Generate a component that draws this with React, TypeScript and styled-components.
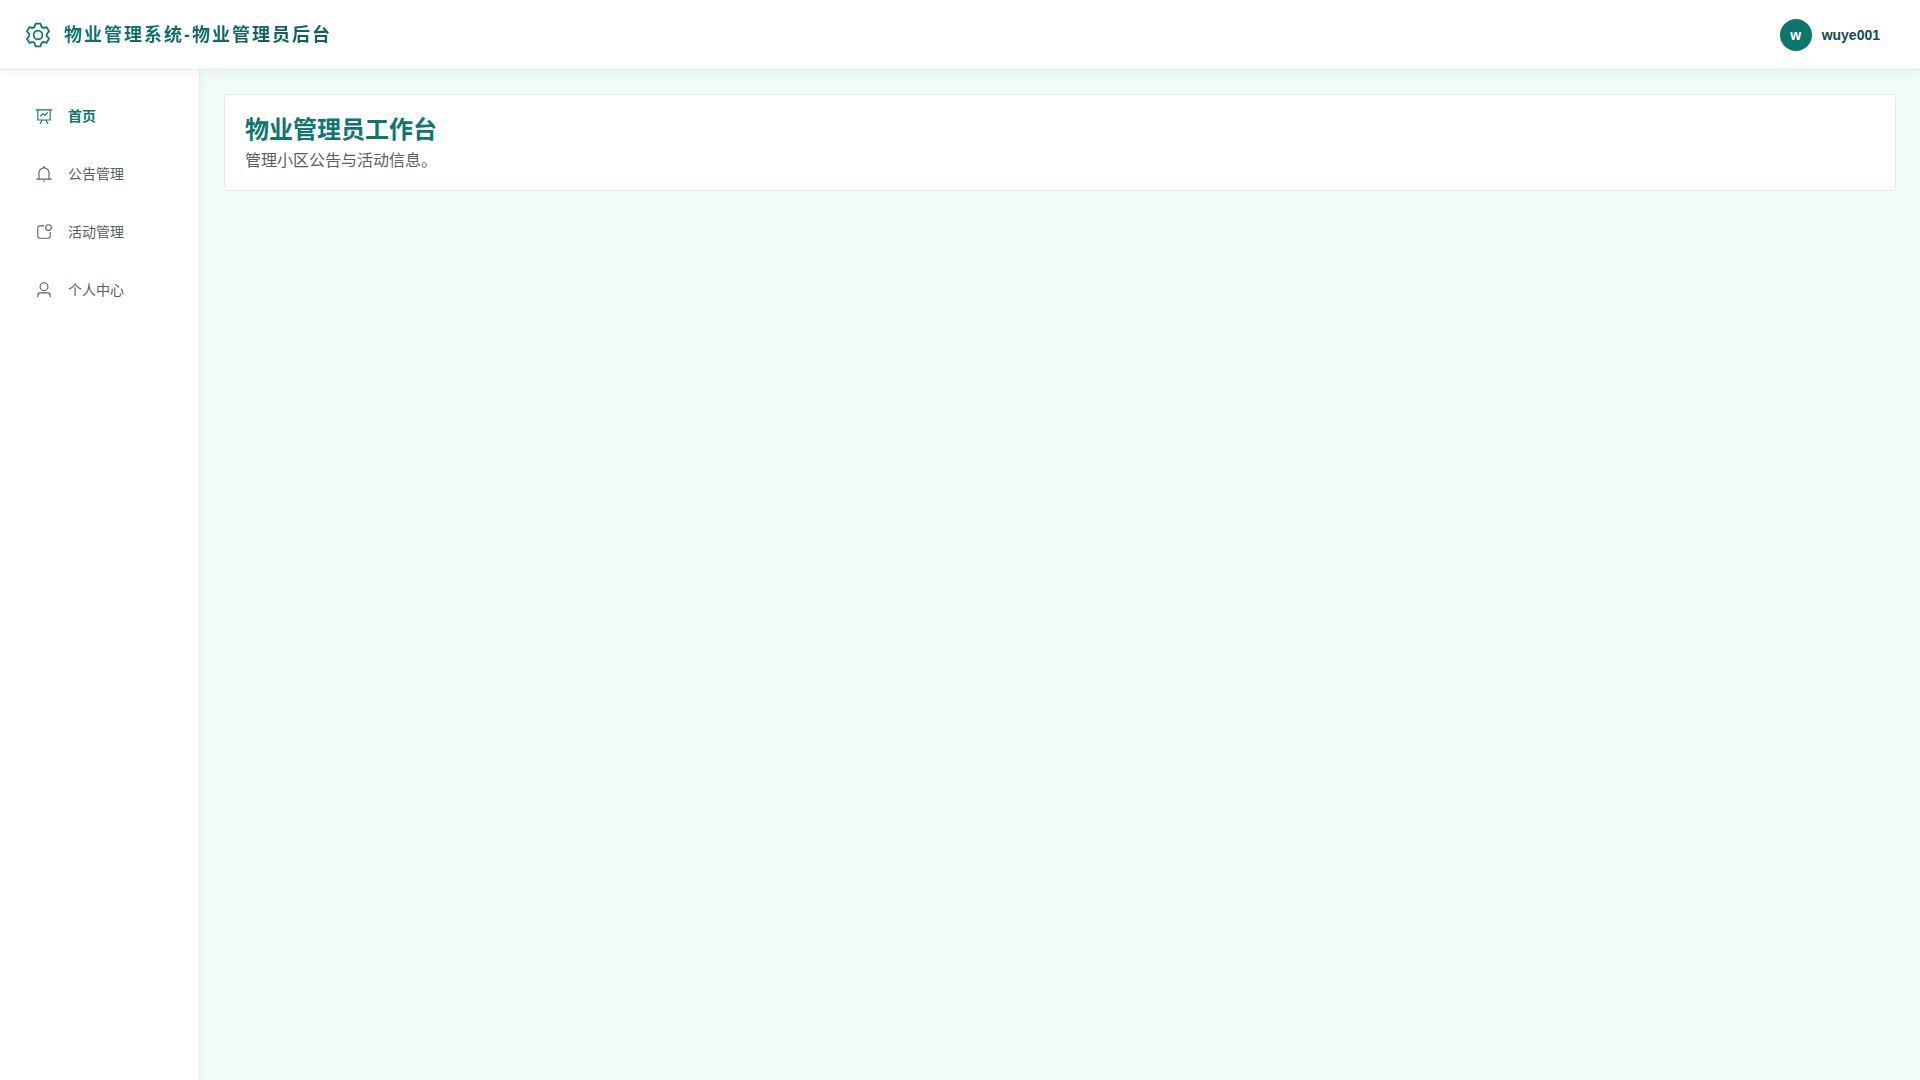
import React from "react";
import styled, { createGlobalStyle } from "styled-components";

const GlobalStyle = createGlobalStyle`
  *, *::before, *::after { box-sizing: border-box; }
  body {
    margin: 0;
    background: #f0fdfa;
    font-family: "Liberation Sans", "Noto Sans CJK SC", sans-serif;
    font-size: 14px;
  }
`;

const Page = styled.div`
  display: flex;
  flex-direction: column;
  min-height: 100vh;
`;

const Header = styled.header`
  position: relative;
  z-index: 1;
  display: flex;
  align-items: center;
  justify-content: space-between;
  height: 70px;
  padding: 0 24px;
  background: #fff;
  border-bottom: 1px solid #d1fae5;
  box-shadow: 0 2px 12px rgba(0, 0, 0, 0.05);
`;

const Brand = styled.div`
  display: flex;
  align-items: center;
  gap: 12px;
  color: #0f766e;
`;

const BrandName = styled.span`
  font-size: 18px;
  font-weight: 600;
  line-height: 20px;
  letter-spacing: 2px;
  background: linear-gradient(135deg, #0f766e, #115e59);
  background-clip: text;
  -webkit-text-fill-color: transparent;
`;

const UserButton = styled.button`
  display: flex;
  align-items: center;
  gap: 10px;
  padding: 8px 16px;
  border: 0;
  background: none;
  color: #134e4a;
  font: inherit;
  font-weight: 600;
  cursor: pointer;
`;

const Avatar = styled.span`
  display: flex;
  align-items: center;
  justify-content: center;
  width: 32px;
  height: 32px;
  border-radius: 50%;
  background: #0f766e;
  color: #fff;
`;

const Body = styled.div`
  display: flex;
  flex: 1;
`;

const Sidebar = styled.nav`
  flex: 0 0 200px;
  padding: 21px 12px;
  background: #fff;
  border-right: 1px solid #d1fae5;
  box-shadow: 2px 0 8px rgba(0, 0, 0, 0.04);
`;

const Menu = styled.ul`
  display: flex;
  flex-direction: column;
  gap: 8px;
  margin: 0;
  padding: 0;
  list-style: none;
`;

const MenuLink = styled.a<{ $active?: boolean }>`
  display: flex;
  align-items: center;
  gap: 12px;
  height: 50px;
  padding: 0 20px;
  color: ${(p) => (p.$active ? "#0f766e" : "#57635f")};
  font-weight: ${(p) => (p.$active ? 600 : 400)};
  line-height: 20px;
  text-decoration: none;
`;

const IconSlot = styled.span`
  display: flex;
  justify-content: center;
  width: 24px;
`;

const Main = styled.main`
  flex: 1;
  padding: 24px;
`;

const Card = styled.section`
  padding: 20px;
  background: #fff;
  border: 1px solid #e4e7ed;
  border-radius: 4px;
`;

const Title = styled.h1`
  margin: 0 0 6px;
  color: #0f766e;
  font-size: 24px;
  line-height: 30px;
`;

const Description = styled.p`
  margin: 0;
  color: #57635f;
  font-size: 16px;
  line-height: 19px;
`;

const icons = {
  setting:
    "M600.704 64a32 32 0 0 1 30.464 22.208l35.2 109.376c14.784 7.232 28.928 15.36 42.432 24.512l112.384-24.192a32 32 0 0 1 34.432 15.36L944.32 364.8a32 32 0 0 1-4.032 37.504l-77.12 85.12a357.12 357.12 0 0 1 0 49.024l77.12 85.248a32 32 0 0 1 4.032 37.504l-88.704 153.6a32 32 0 0 1-34.432 15.296L708.8 803.904c-13.44 9.088-27.648 17.28-42.368 24.512l-35.264 109.376A32 32 0 0 1 600.704 960H423.296a32 32 0 0 1-30.464-22.208L357.696 828.48a351.616 351.616 0 0 1-42.56-24.64l-112.32 24.256a32 32 0 0 1-34.432-15.36L79.68 659.2a32 32 0 0 1 4.032-37.504l77.12-85.248a357.12 357.12 0 0 1 0-48.896l-77.12-85.248A32 32 0 0 1 79.68 364.8l88.704-153.6a32 32 0 0 1 34.432-15.296l112.32 24.256c13.568-9.152 27.776-17.408 42.56-24.64l35.2-109.312A32 32 0 0 1 423.232 64H600.64zm-23.424 64H446.72l-36.352 113.088-24.512 11.968a294.113 294.113 0 0 0-34.816 20.096l-22.656 15.36-116.224-25.088-65.28 113.152 79.68 88.192-1.92 27.136a293.12 293.12 0 0 0 0 40.192l1.92 27.136-79.808 88.192 65.344 113.152 116.224-25.024 22.656 15.296a294.113 294.113 0 0 0 34.816 20.096l24.512 11.968L446.72 896h130.688l36.48-113.152 24.448-11.904a288.282 288.282 0 0 0 34.752-20.096l22.592-15.296 116.288 25.024 65.28-113.152-79.744-88.192 1.92-27.136a293.12 293.12 0 0 0 0-40.256l-1.92-27.136 79.808-88.128-65.344-113.152-116.288 24.96-22.592-15.232a287.616 287.616 0 0 0-34.752-20.096l-24.448-11.904L577.344 128zM512 320a192 192 0 1 1 0 384 192 192 0 0 1 0-384m0 64a128 128 0 1 0 0 256 128 128 0 0 0 0-256",
  board:
    "M359.168 768H160a32 32 0 0 1-32-32V192H64a32 32 0 0 1 0-64h896a32 32 0 1 1 0 64h-64v544a32 32 0 0 1-32 32H665.216l110.848 192h-73.856L591.36 768H433.024L322.176 960H248.32zM832 192H192v512h640zM342.656 534.656a32 32 0 1 1-45.312-45.312L444.992 341.76l125.44 94.08L679.04 300.032a32 32 0 1 1 49.92 39.936L581.632 524.224 451.008 426.24 342.656 534.592z",
  bell:
    "M512 64a64 64 0 0 1 64 64v64H448v-64a64 64 0 0 1 64-64M256 768h512V448a256 256 0 1 0-512 0zm256-640a320 320 0 0 1 320 320v384H192V448a320 320 0 0 1 320-320M96 768h832q32 0 32 32t-32 32H96q-32 0-32-32t32-32m352 128h128a64 64 0 0 1-128 0",
  notification:
    "M512 128v64H256a64 64 0 0 0-64 64v512a64 64 0 0 0 64 64h512a64 64 0 0 0 64-64V512h64v256a128 128 0 0 1-128 128H256a128 128 0 0 1-128-128V256a128 128 0 0 1 128-128zM768 384a128 128 0 1 0 0-256 128 128 0 0 0 0 256m0 64a192 192 0 1 1 0-384 192 192 0 0 1 0 384",
  user:
    "M512 512a192 192 0 1 0 0-384 192 192 0 0 0 0 384m0 64a256 256 0 1 1 0-512 256 256 0 0 1 0 512m320 320v-96a96 96 0 0 0-96-96H288a96 96 0 0 0-96 96v96a32 32 0 1 1-64 0v-96a160 160 0 0 1 160-160h448a160 160 0 0 1 160 160v96a32 32 0 1 1-64 0",
};

type IconName = keyof typeof icons;

function Icon({ name, size = 18 }: { name: IconName; size?: number }) {
  return (
    <svg width={size} height={size} viewBox="0 0 1024 1024" fill="currentColor" aria-hidden="true">
      <path d={icons[name]} />
    </svg>
  );
}

const menu: { label: string; icon: IconName; href: string }[] = [
  { label: "首页", icon: "board", href: "#home" },
  { label: "公告管理", icon: "bell", href: "#notices" },
  { label: "活动管理", icon: "notification", href: "#activities" },
  { label: "个人中心", icon: "user", href: "#profile" },
];

export default function App() {
  return (
    <Page lang="zh-CN">
      <GlobalStyle />
      <Header>
        <Brand>
          <Icon name="setting" size={28} />
          <BrandName>物业管理系统-物业管理员后台</BrandName>
        </Brand>
        <UserButton type="button">
          <Avatar>w</Avatar>
          <span>wuye001</span>
        </UserButton>
      </Header>
      <Body>
        <Sidebar>
          <Menu>
            {menu.map((item, i) => (
              <li key={item.href}>
                <MenuLink href={item.href} $active={i === 0} aria-current={i === 0 ? "page" : undefined}>
                  <IconSlot>
                    <Icon name={item.icon} />
                  </IconSlot>
                  <span>{item.label}</span>
                </MenuLink>
              </li>
            ))}
          </Menu>
        </Sidebar>
        <Main>
          <Card>
            <Title>物业管理员工作台</Title>
            <Description>管理小区公告与活动信息。</Description>
          </Card>
        </Main>
      </Body>
    </Page>
  );
}
